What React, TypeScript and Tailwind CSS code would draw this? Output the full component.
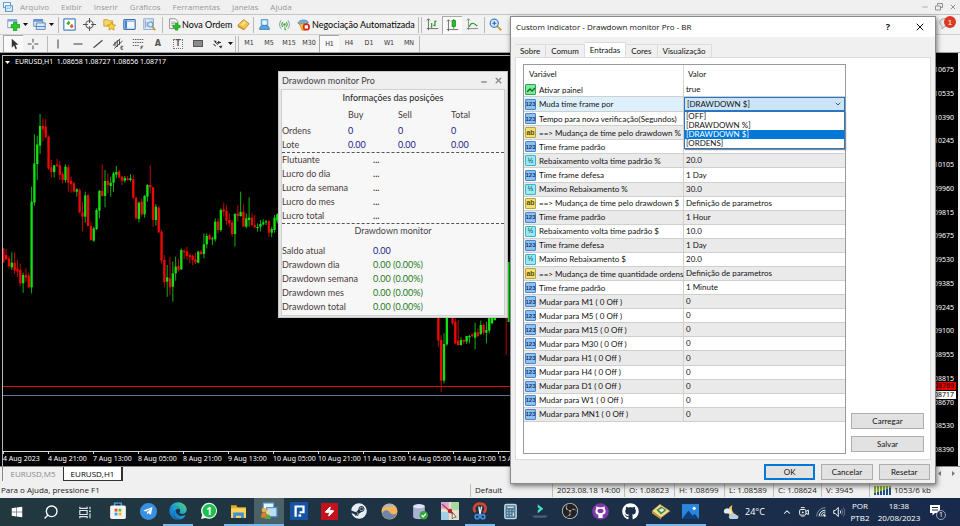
import type { ReactNode } from "react"
import { Calculator, ChevronDown, ChevronUp, Minus, Search, X, Zap } from "lucide-react"
import { FaEdge, FaGithub, FaSteam, FaTelegramPlane, FaWindows } from "react-icons/fa"
import { SiObsstudio } from "react-icons/si"
import { clsx } from "clsx"

type Candle = [high: number, low: number, top: number, bottom: number, up: 0 | 1]

// first visible run of bars
const firstRun: Candle[] = [
  [595, 638, 595, 637, 0], [597, 630, 615, 628, 0], [617, 655, 625, 648, 0], [607, 660, 638, 652, 1],
  [607, 672, 638, 662, 0], [630, 680, 655, 665, 0], [640, 710, 660, 700, 0], [668, 728, 675, 700, 1],
  [655, 695, 675, 683, 0], [668, 715, 677, 712, 0], [410, 730, 455, 712, 1], [253, 467, 340, 458, 1],
  [257, 390, 283, 342, 1], [192, 312, 228, 287, 1], [205, 275, 228, 238, 0], [207, 265, 230, 262, 0],
  [257, 360, 260, 355, 0], [330, 383, 352, 365, 0], [345, 382, 346, 366, 1], [326, 352, 344, 348, 0],
  [333, 390, 346, 375, 0], [365, 400, 372, 390, 0], [343, 398, 350, 390, 1], [345, 425, 352, 398, 0],
  [380, 428, 392, 402, 0], [395, 427, 400, 425, 0], [415, 440, 418, 425, 1], [415, 490, 420, 487, 0],
  [455, 545, 487, 500, 0], [425, 518, 436, 500, 1], [432, 528, 436, 528, 0], [515, 572, 528, 570, 0],
  [530, 575, 535, 572, 1], [475, 540, 480, 537, 1], [420, 505, 423, 482, 1], [343, 440, 423, 438, 0],
  [360, 472, 393, 438, 1], [370, 430, 393, 405, 0], [380, 440, 398, 408, 1], [365, 425, 370, 398, 1],
  [348, 385, 366, 374, 1], [360, 385, 364, 382, 0], [378, 405, 380, 392, 0], [378, 398, 384, 392, 1],
  [378, 392, 385, 390, 0], [372, 395, 385, 390, 1], [375, 447, 388, 443, 0], [440, 510, 443, 505, 0],
  [455, 517, 458, 507, 1], [445, 500, 455, 493, 0], [435, 503, 438, 493, 1], [402, 455, 405, 440, 1],
  [346, 430, 405, 412, 0], [410, 530, 412, 510, 0], [462, 527, 470, 510, 1], [468, 550, 473, 547, 0],
  [540, 640, 545, 632, 0], [615, 712, 630, 697, 0], [645, 740, 682, 695, 1], [620, 735, 685, 712, 0],
  [635, 755, 670, 710, 1], [620, 692, 650, 670, 1], [627, 665, 648, 660, 0], [595, 660, 600, 658, 1],
  [597, 628, 603, 607, 0], [590, 630, 604, 618, 0], [610, 640, 615, 622, 0], [613, 645, 618, 630, 0],
  [608, 642, 628, 637, 0], [602, 640, 605, 638, 1], [600, 615, 605, 612, 0], [550, 625, 583, 612, 1],
  [550, 595, 558, 583, 1], [552, 570, 556, 568, 0], [560, 585, 565, 568, 1], [505, 575, 515, 568, 1],
  [505, 550, 515, 540, 0], [475, 545, 480, 540, 1], [458, 500, 478, 485, 0], [465, 525, 482, 512, 0],
  [490, 530, 510, 520, 0], [510, 560, 518, 552, 0], [490, 590, 492, 552, 1], [465, 515, 490, 498, 0],
  [425, 500, 486, 498, 1], [463, 530, 485, 530, 0], [490, 535, 505, 530, 1], [442, 530, 503, 510, 1],
  [490, 530, 503, 525, 0], [495, 535, 525, 532, 0], [520, 545, 531, 534, 1], [510, 545, 522, 530, 1],
  [508, 527, 517, 523, 1], [510, 525, 514, 517, 1], [510, 562, 514, 548, 0], [530, 562, 537, 548, 1],
  [495, 548, 503, 540, 1], [490, 520, 493, 512, 1],
]

// bars that follow the monitor panel
const secondRun: Candle[] = [
  [780, 890, 790, 872, 0], [855, 1026, 870, 992, 0], [850, 1000, 882, 992, 1], [787, 887, 790, 883, 1],
  [780, 800, 790, 800, 1], [790, 825, 795, 820, 0], [805, 883, 815, 880, 0], [810, 887, 872, 885, 0],
  [862, 887, 870, 885, 1], [868, 882, 870, 875, 0], [858, 882, 858, 875, 1], [855, 880, 858, 862, 1],
  [850, 862, 853, 858, 0], [818, 898, 847, 863, 1], [835, 862, 847, 858, 0], [812, 855, 825, 852, 1],
  [820, 855, 825, 848, 0], [815, 880, 840, 848, 1], [790, 850, 800, 842, 1], [795, 822, 800, 820, 1],
  [790, 812, 795, 810, 1], [780, 800, 785, 795, 0], [770, 798, 775, 790, 1], [780, 800, 785, 795, 0],
  [800, 915, 800, 805, 0],
]

const timeLabels = [
  "4 Aug 2023", "4 Aug 21:00", "7 Aug 13:00", "8 Aug 05:00", "8 Aug 21:00", "9 Aug 13:00",
  "10 Aug 05:00", "10 Aug 21:00", "11 Aug 13:00", "14 Aug 05:00", "14 Aug 21:00", "15 Aug 13:00",
]

const priceLabels = [
  "1.10675", "1.10535", "1.10390", "1.10245", "1.10105", "1.09960", "1.09815", "1.09675", "1.09530",
  "1.09385", "1.09245", "1.09100", "1.08955", "1.08815", "1.08670", "1.08530", "1.08390",
]

function Candles({ bars, start }: { bars: Candle[]; start: number }) {
  return (
    <>
      {bars.map(([high, low, top, bottom, up], i) => {
        const x = 10 + (start + i) * 8.475
        return (
          <g key={i} fill={up ? "#12e012" : "#ee0808"}>
            <rect x={x - 1.5} y={high} width="3" height={low - high} opacity=".8" />
            <rect x={x - 3.5} y={top} width="7" height={Math.max(bottom - top, 3)} />
          </g>
        )
      })}
    </>
  )
}

function Chart() {
  return (
    <section
      aria-label="EURUSD,H1"
      className="mr-[2px] flex min-h-0 flex-1 border-l-2 border-t-2 border-black bg-black font-['Noto_Sans',sans-serif] text-[7px] text-white"
    >
      <div className="flex min-w-0 flex-1 flex-col border-l border-t border-[#b8b8b8]">
        <div className="relative min-h-0 flex-1 overflow-hidden border-b border-[#d8d8d8]">
          <svg className="absolute inset-0 h-full w-full" aria-hidden="true">
            <g transform="translate(-3 -6) scale(.33333)">
              <Candles bars={firstRun} start={0} />
              <Candles bars={secondRun} start={154} />
              <rect x="1523" y="636" width="6" height="180" fill="#12e012" />
            </g>
            <rect x="0" y="330" width="100%" height="1" fill="#d01414" />
            <rect x="0" y="339" width="100%" height="1" fill="#5f7590" />
          </svg>
          <p className="relative flex items-center gap-[5px] pl-[2px] pt-px leading-[10px]">
            <svg width="5" height="3" viewBox="0 0 5 3" fill="#fff" aria-hidden="true">
              <path d="M0 0h5L2.5 3z" />
            </svg>
            <span className="whitespace-pre">EURUSD,H1  1.08658 1.08727 1.08656 1.08717</span>
          </p>
        </div>
        <div className="flex h-[14px] overflow-hidden">
          {timeLabels.map((label) => (
            <span key={label} className="w-[45px] shrink-0 whitespace-nowrap leading-[10px]">
              <i className="block h-[2px] w-px bg-[#d8d8d8]" />
              {label}
            </span>
          ))}
        </div>
      </div>
      <div className="relative flex w-[46px] flex-col justify-between border-l border-[#b8b8b8] pb-[11px] pr-1 pt-[10px] text-right leading-[10px]">
        {priceLabels.map((label) => (
          <span key={label}>{label}</span>
        ))}
        <span className="absolute right-[2px] top-[327px] bg-[#f00000] pr-[2px] leading-[8px] text-black">1.08769</span>
        <span className="absolute right-[2px] top-[336px] bg-white pr-[2px] leading-[8px] text-black">1.08717</span>
      </div>
    </section>
  )
}

function Icon({ children, size = 13 }: { children: ReactNode; size?: number }) {
  return (
    <svg width={size} height={size} viewBox="0 0 16 16" fill="none" aria-hidden="true" className="shrink-0">
      {children}
    </svg>
  )
}

function Tool({
  label,
  children,
  pressed = false,
}: {
  label: string
  children: ReactNode
  pressed?: boolean
}) {
  return (
    <button
      type="button"
      aria-label={label}
      className={clsx(
        "flex h-[18px] w-5 shrink-0 items-center justify-center",
        pressed && "border-l border-t border-[#a8a8a8] bg-[#fafafa]"
      )}
    >
      {children}
    </button>
  )
}

function Sep({ wide = false }: { wide?: boolean }) {
  return <span className={clsx("h-4 shrink-0 border-l border-[#b9b9b9]", wide ? "w-1 border-r" : "w-px")} />
}

function Caret() {
  return (
    <svg width="5" height="3" viewBox="0 0 5 3" aria-hidden="true" className="shrink-0">
      <path d="M0 0h5L2.5 3z" fill="#111" />
    </svg>
  )
}

function MainToolbar() {
  return (
    <div className="flex h-5 items-center border-t border-[#c4c4c4] bg-[#f2f2f2] pl-[3px] font-[Lato,sans-serif] text-[9px] text-black">
      <Tool label="Novo gráfico">
        <Icon>
          <rect x="1" y="2" width="11" height="10" fill="#fff" stroke="#6b93c4" />
          <path d="M1 2h11v2.500H1z" fill="#7fa9dc" />
          <path d="M8 5h4v3h4v4h-4v4H8v-4H5V8h3z" fill="#24cc24" stroke="#128512" strokeWidth=".7" />
        </Icon>
      </Tool>
      <Caret />
      <span className="w-px" />
      <Tool label="Perfis">
        <Icon>
          <rect x="1" y="2" width="11" height="8" fill="#fff" stroke="#3f73b3" />
          <path d="M1 2h11v2.500H1zM4 6h11v2.500H4z" fill="#5e94d6" />
          <path d="M4 6h11v8H4z" fill="#d9e8f8" stroke="#3f73b3" />
          <path d="M4 10h11v1H4z" fill="#3f73b3" />
        </Icon>
      </Tool>
      <Caret />
      <span className="w-1" />
      <Sep />
      <Tool label="Observação do mercado">
        <Icon>
          <rect x="1" y="1" width="14" height="14" rx="1" fill="#fff" stroke="#4d83c2" strokeWidth="1.500" />
          <path d="M4 7l3-4 2 3-2 3z" fill="#35b335" />
          <path d="M8 10l3-3 2 3-2 3z" fill="#e05d2b" />
        </Icon>
      </Tool>
      <Tool label="Janela de dados">
        <Icon>
          <circle cx="8" cy="8" r="4.500" stroke="#555" strokeWidth="1.300" />
          <path d="M8 0v6M8 10v6M0 8h6M10 8h6" stroke="#555" strokeWidth="1.300" />
        </Icon>
      </Tool>
      <Tool label="Navegador">
        <Icon>
          <path d="M1 2h5l1 1.500h5V10H1z" fill="#f5d66b" stroke="#c79a24" />
          <path d="M10.500 5l1.600 3.300 3.600.5-2.600 2.500.6 3.600-3.200-1.700-3.200 1.700.6-3.600-2.600-2.500 3.600-.5z" fill="#ffd23c" stroke="#b98512" strokeWidth=".8" />
        </Icon>
      </Tool>
      <Tool label="Terminal">
        <Icon>
          <rect x="1" y="2" width="14" height="12" rx="1" fill="#f3f8ff" stroke="#3a6fb0" strokeWidth="1.400" />
          <path d="M2 3h3v10H2z" fill="#4484cf" />
          <path d="M5 3h9v2H5z" fill="#9fc2ea" />
        </Icon>
      </Tool>
      <Tool label="Testador de estratégia">
        <Icon>
          <rect x="1" y="1" width="12" height="13" fill="#dfeaf6" stroke="#7d9dc2" />
          <path d="M3 3v9M5 5v6M11 3v3" stroke="#7d9dc2" />
          <circle cx="9" cy="8" r="3.200" fill="#cfe6fb" stroke="#5d8cc0" strokeWidth="1.200" />
          <path d="M11.500 10.500L15 15" stroke="#c9922b" strokeWidth="2" />
        </Icon>
      </Tool>
      <span className="w-[3px]" />
      <Sep />
      <button type="button" className="ml-[5px] flex w-[65px] shrink-0 items-center gap-px whitespace-nowrap">
        <Icon>
          <path d="M2 1h7l3 3v9H2z" fill="#fff" stroke="#777" />
          <path d="M4 5h5M4 7h4M4 9h3" stroke="#888" />
          <path d="M9 6h3v3h3v3h-3v3H9v-3H6V9h3z" fill="#21c421" stroke="#128012" strokeWidth=".6" />
        </Icon>
        Nova Ordem
      </button>
      <Tool label="MetaEditor">
        <Icon>
          <path d="M1 9l7-7 7 5-6 7z" fill="#f4c64a" stroke="#b5811c" />
          <path d="M1 9l8 5v1.500L1 11z" fill="#c98f1f" />
          <path d="M5 8l4-4 2 1.500-4 4z" fill="#fbe49b" />
        </Icon>
      </Tool>
      <Sep />
      <Tool label="Conta">
        <Icon>
          <path d="M4 2h8v7H4z" fill="#b8dcf7" stroke="#3b86c6" />
          <path d="M2 14c0-4 3-5 6-5s6 1 6 5z" fill="#5aa7e2" stroke="#2f77b5" />
          <circle cx="8" cy="6" r="2.500" fill="#e8f4fd" />
        </Icon>
      </Tool>
      <Tool label="Sinais">
        <Icon>
          <path d="M4 3a7 7 0 000 10M12 3a7 7 0 010 10" stroke="#8fa7b3" strokeWidth="1.300" />
          <path d="M6 5a4 4 0 000 6M10 5a4 4 0 010 6" stroke="#39a839" strokeWidth="1.300" />
          <circle cx="8" cy="8" r="1.500" fill="#39a839" />
          <path d="M8 9l2 6H8z" fill="#39a839" />
        </Icon>
      </Tool>
      <button type="button" className="ml-[3px] flex w-[121px] shrink-0 items-center gap-[2px] whitespace-nowrap">
        <Icon>
          <path d="M1 6c2-4 10-5 13-1l-2 3H3z" fill="#6fb3e6" stroke="#3379b4" strokeWidth=".8" />
          <path d="M3 7h9l-2 8H6z" fill="#f2c443" stroke="#b98512" strokeWidth=".8" />
          <circle cx="11.500" cy="11" r="4.500" fill="#d92a14" />
          <rect x="9.500" y="9" width="4" height="4" fill="#fff" />
        </Icon>
        Negociação Automatizada
      </button>
      <Sep wide />
      <Tool label="Gráfico de barras">
        <Icon>
          <path d="M3 1v14M1 13h14M1 3l2-2 2 2" stroke="#555" />
          <path d="M7 6v6M6 11h1M11 3v7M11 4h2M9 9h2" stroke="#1a9a1a" strokeWidth="1.400" />
        </Icon>
      </Tool>
      <Tool label="Candelabros" pressed>
        <Icon>
          <path d="M3 1v14M1 13h14M1 3l2-2 2 2" stroke="#555" />
          <path d="M9.500 0v12" stroke="#128512" />
          <rect x="7.500" y="2" width="4" height="7" fill="#27c427" stroke="#128512" />
        </Icon>
      </Tool>
      <Tool label="Gráfico de linha">
        <Icon>
          <path d="M3 1v14M1 13h14M1 3l2-2 2 2" stroke="#777" />
          <path d="M4 11c2-6 5-6 10-1" stroke="#1a9a1a" strokeWidth="1.300" />
        </Icon>
      </Tool>
      <span className="w-[2px]" />
      <Sep />
      <Tool label="Ampliar">
        <Icon>
          <path d="M10 10l5 5" stroke="#d3a02d" strokeWidth="2.500" />
          <circle cx="6.500" cy="6.500" r="5" fill="#d7ecfd" stroke="#3b80c6" strokeWidth="1.500" />
          <path d="M4 6.500h5M6.500 4v5" stroke="#2a66ab" strokeWidth="1.400" />
        </Icon>
      </Tool>
    </div>
  )
}

const frames = ["M1", "M5", "M15", "M30", "H1", "H4", "D1", "W1", "MN"]

function DrawToolbar() {
  return (
    <div className="flex h-[18px] items-center border-t border-[#cfcfcf] bg-[#f2f2f2] pl-[3px] font-['DejaVu_Sans_Condensed','DejaVu_Sans',sans-serif] text-[7px] text-[#333]">
      <Tool label="Cursor" pressed>
        <Icon size={12}>
          <path d="M5 1v12l3-3 2 5 2-1-2-5h4z" fill="#333" />
        </Icon>
      </Tool>
      <Tool label="Cruz">
        <Icon size={12}>
          <path d="M8 1v5M8 10v5M1 8h5M10 8h5" stroke="#444" strokeWidth="1.300" />
        </Icon>
      </Tool>
      <span className="w-1" />
      <Sep />
      <Tool label="Linha vertical">
        <Icon size={12}>
          <path d="M8 2v12" stroke="#444" strokeWidth="1.400" />
        </Icon>
      </Tool>
      <Tool label="Linha horizontal">
        <Icon size={12}>
          <path d="M2 8h12" stroke="#444" strokeWidth="1.400" />
        </Icon>
      </Tool>
      <Tool label="Linha de tendência">
        <Icon size={12}>
          <path d="M2 13L14 3" stroke="#444" strokeWidth="1.400" />
        </Icon>
      </Tool>
      <Tool label="Canal">
        <Icon size={12}>
          <path d="M1 10L11 1M3 14L14 4M4 5v6M7 3v9M10 3v6" stroke="#333" strokeWidth="1.200" />
          <path d="M15 11h-3v4h3M12 13h2" stroke="#333" />
        </Icon>
      </Tool>
      <Tool label="Fibonacci">
        <Icon size={12}>
          <path d="M1 2h14M1 6h14M1 10h9" stroke="#555" strokeDasharray="2 1" strokeWidth="1.200" />
          <path d="M12 15v-4h3M12 13h2" stroke="#333" />
        </Icon>
      </Tool>
      <Tool label="Texto">
        <span className="text-[9px] font-bold text-[#555]">A</span>
      </Tool>
      <Tool label="Etiqueta">
        <span className="flex h-[10px] w-[10px] items-center justify-center border border-dotted border-[#777] text-[8px] font-bold text-[#555]">
          T
        </span>
      </Tool>
      <Tool label="Retângulo">
        <span className="h-[7px] w-[10px] border border-[#555] bg-[#8a8a8a]" />
      </Tool>
      <Tool label="Setas">
        <Icon size={12}>
          <path d="M2 3l4 1-1 3zM9 11l5-1-2 4z" fill="#333" />
          <path d="M4 5l4 4M2 8l3 3M9 4v4M7 6h5" stroke="#333" strokeWidth="1.400" />
        </Icon>
      </Tool>
      <Caret />
      <span className="w-[2px]" />
      <Sep wide />
      {frames.map((frame) => (
        <Tool key={frame} label={frame} pressed={frame === "H1"}>
          {frame}
        </Tool>
      ))}
      <Sep />
    </div>
  )
}

const menus = ["Arquivo", "Exibir", "Inserir", "Gráficos", "Ferramentas", "Janelas", "Ajuda"]

function MenuBar() {
  return (
    <div className="flex h-[14px] items-center bg-[#f0f0f0] pl-[3px] pr-[3px] font-['Open_Sans',sans-serif] text-[8px] text-[#989898]">
      <Icon size={10}>
        <rect x="1" y="1" width="11" height="8" fill="#fff" stroke="#4a90d0" strokeWidth="1.500" />
        <rect x="4" y="6" width="11" height="9" fill="#e3f0fc" stroke="#4a90d0" strokeWidth="1.500" />
        <path d="M6 12l2-3 2 2 3-3" stroke="#4a90d0" />
      </Icon>
      <nav className="ml-[7px] flex gap-3">
        {menus.map((menu) => (
          <button key={menu} type="button">
            {menu}
          </button>
        ))}
      </nav>
      <div className="ml-auto flex gap-[6px] text-[#8c9099]">
        <button type="button" aria-label="Minimizar"><Minus size={8} /></button>
        <button type="button" aria-label="Restaurar">
          <Icon size={8}>
            <path d="M5 5V1h10v8h-4M1 6h10v8H1z" stroke="currentColor" strokeWidth="2" />
          </Icon>
        </button>
        <button type="button" aria-label="Fechar"><X size={8} strokeWidth={3} /></button>
      </div>
    </div>
  )
}

const results = ["Flutuante", "Lucro do dia", "Lucro da semana", "Lucro do mes", "Lucro total"]
const drawdowns = ["Drawdown dia", "Drawdown semana", "Drawdown mes", "Drawdown total"]

function MonitorPanel() {
  return (
    <section className="absolute left-[278px] top-[71px] w-[230px] border border-[#c9c9c9] bg-[#e4e4e4] pb-px font-[Lato,sans-serif] text-[9px] leading-[14px] text-[#4b3b3b]">
      <header className="flex h-[17px] items-center justify-between bg-[#efefef] pl-[3px] pr-1 text-[#444]">
        <h2>Drawdown monitor Pro</h2>
        <div className="flex gap-[6px] text-[#8d8d8d]">
          <button type="button" aria-label="Minimizar" className="pt-[3px]"><Minus size={8} strokeWidth={4} /></button>
          <button type="button" aria-label="Fechar"><X size={9} strokeWidth={4} /></button>
        </div>
      </header>
      <div className="mx-[2px] border border-[#d0d0d0] bg-[#f7f7f7]">
        <h3 className="pt-px text-center text-[#222]">Informações das posições</h3>
        <table className="w-full text-left">
          <thead>
            <tr className="h-[19px]">
              <th className="w-[66px] font-normal" />
              <th className="w-[50px] font-normal">Buy</th>
              <th className="w-[53px] font-normal">Sell</th>
              <th className="font-normal">Total</th>
            </tr>
          </thead>
          <tbody className="text-[#1c1c8c]">
            <tr>
              <th className="font-normal text-[#4b3b3b]">Ordens</th>
              <td>0</td>
              <td>0</td>
              <td>0</td>
            </tr>
            <tr>
              <th className="font-normal text-[#4b3b3b]">Lote</th>
              <td>0.00</td>
              <td>0.00</td>
              <td>0.00</td>
            </tr>
          </tbody>
        </table>
        <dl className="grid grid-cols-[91px_1fr] border-y border-dashed border-[#555]">
          {results.map((label) => (
            <div key={label} className="contents">
              <dt>{label}</dt>
              <dd className="font-bold">...</dd>
            </div>
          ))}
        </dl>
        <h3 className="text-center text-[#444]">Drawdown monitor</h3>
        <dl className="grid grid-cols-[91px_1fr] pb-px pt-[6px]">
          <dt>Saldo atual</dt>
          <dd className="text-[#1c1c8c]">0.00</dd>
          {drawdowns.map((label) => (
            <div key={label} className="contents">
              <dt>{label}</dt>
              <dd className="text-[#1e7a1e]">0.00 (0.00%)</dd>
            </div>
          ))}
        </dl>
      </div>
    </section>
  )
}

type Kind = "bool" | "int" | "text" | "real"

const inputs: { kind: Kind; name: string; value: string }[] = [
  { kind: "bool", name: "Ativar painel", value: "true" },
  { kind: "int", name: "Muda time frame por", value: "[DRAWDOWN $]" },
  { kind: "int", name: "Tempo para nova verificação(Segundos)", value: "" },
  { kind: "text", name: "==> Mudança de time pelo drawdown %", value: "" },
  { kind: "int", name: "Time frame padrão", value: "" },
  { kind: "real", name: "Rebaixamento volta time padrão %", value: "20.0" },
  { kind: "int", name: "Time frame defesa", value: "1 Day" },
  { kind: "real", name: "Maximo Rebaixamento %", value: "30.0" },
  { kind: "text", name: "==> Mudança de time pelo drawdown $", value: "Definição de parametros" },
  { kind: "int", name: "Time frame padrão", value: "1 Hour" },
  { kind: "real", name: "Rebaixamento volta time padrão $", value: "10.0" },
  { kind: "int", name: "Time frame defesa", value: "1 Day" },
  { kind: "real", name: "Maximo Rebaixamento $", value: "20.0" },
  { kind: "text", name: "==> Mudança de time quantidade ordens", value: "Definição de parametros" },
  { kind: "int", name: "Time frame padrão", value: "1 Minute" },
  { kind: "int", name: "Mudar para M1 ( 0 Off )", value: "0" },
  { kind: "int", name: "Mudar para M5 ( 0 Off )", value: "0" },
  { kind: "int", name: "Mudar para M15 ( 0 Off )", value: "0" },
  { kind: "int", name: "Mudar para M30 ( 0 Off )", value: "0" },
  { kind: "int", name: "Mudar para H1 ( 0 Off )", value: "0" },
  { kind: "int", name: "Mudar para H4 ( 0 Off )", value: "0" },
  { kind: "int", name: "Mudar para D1 ( 0 Off )", value: "0" },
  { kind: "int", name: "Mudar para W1 ( 0 Off )", value: "0" },
  { kind: "int", name: "Mudar para MN1 ( 0 Off )", value: "0" },
]

const kindStyle: Record<Kind, string> = {
  bool: "border-[#2aa84a] bg-[#7fe89a] text-[#0c6b25]",
  int: "border-[#4a86c8] bg-[#8fc0f0] text-[#0d3a75]",
  text: "border-[#b8a43a] bg-[#f0e07a] text-[#5e4d00]",
  real: "border-[#3fb4c8] bg-[#9be8f2] text-[#0b6a7a]",
}

const kindText: Record<Kind, string> = { bool: "", int: "123", text: "ab", real: "½" }

function KindIcon({ kind }: { kind: Kind }) {
  return (
    <span
      className={clsx(
        "flex h-[11px] w-[11px] shrink-0 items-center justify-center rounded-[1px] border font-['Liberation_Sans',sans-serif] font-bold leading-[8px]",
        kind === "int" ? "text-[6px]" : "text-[7px]",
        kindStyle[kind]
      )}
    >
      {kind === "bool" ? (
        <svg width="8" height="6" viewBox="0 0 8 6" fill="none" aria-hidden="true">
          <path d="M0 5l3-3 2 2 3-3" stroke="currentColor" strokeWidth="1.300" />
        </svg>
      ) : (
        kindText[kind]
      )}
    </span>
  )
}

const options = ["[OFF]", "[DRAWDOWN %]", "[DRAWDOWN $]", "[ORDENS]"]

function ModeSelect() {
  return (
    <div className="relative">
      <select
        aria-label="Muda time frame por"
        defaultValue="[DRAWDOWN $]"
        className="block h-[14px] w-full appearance-none border border-[#2a74c4] bg-[#cce4f7] pl-[2px] leading-[12px]"
      >
        {options.map((option) => (
          <option key={option}>{option}</option>
        ))}
      </select>
      <ChevronDown size={8} className="pointer-events-none absolute right-[3px] top-[3px]" />
      <ul
        role="listbox"
        aria-label="Opções"
        className="absolute inset-x-0 top-[14px] z-10 border border-[#2a74c4] bg-white leading-[9px] shadow-[1px_1px_1px_#888]"
      >
        {options.map((option) => (
          <li
            key={option}
            role="option"
            aria-selected={option === "[DRAWDOWN $]"}
            className={clsx("pl-px", option === "[DRAWDOWN $]" && "bg-[#0078d7] text-white")}
          >
            {option}
          </li>
        ))}
      </ul>
    </div>
  )
}

function InputsTable() {
  return (
    <div className="h-[390px] w-[323px] shrink-0 border border-[#9a9a9a] bg-white">
      <table className="h-[357px] w-full table-fixed border-separate border-spacing-0 text-left">
        <thead>
          <tr className="h-[18px]">
            <th className="w-[159px] pl-[5px] font-normal">Variável</th>
            <th className="border-l border-[#d8d8d8] pl-1 font-normal">Valor</th>
          </tr>
        </thead>
        <tbody>
          {inputs.map((input, i) => (
            <tr
              key={i}
              className={clsx(i === 1 ? "bg-[#dff0fd]" : i % 2 ? "bg-[#eaeaea]" : "bg-white")}
            >
              <td className="h-[14px] border-b border-[#cfcfcf] py-0 pl-px">
                <div className="flex h-[13px] items-center gap-[3px] whitespace-nowrap">
                  <KindIcon kind={input.kind} />
                  {input.name}
                </div>
              </td>
              <td className={clsx("h-[14px] border-b border-l border-[#cfcfcf] py-0 leading-[13px]", i !== 1 && "pl-[2px]")}>
                {i === 1 ? <ModeSelect /> : input.value}
              </td>
            </tr>
          ))}
        </tbody>
      </table>
    </div>
  )
}

function DialogButton({ children, primary = false }: { children: ReactNode; primary?: boolean }) {
  return (
    <button
      type="button"
      className={clsx(
        "flex h-4 items-center justify-center bg-[#e2e2e2]",
        primary ? "border-2 border-[#0078d7]" : "border border-[#adadad]"
      )}
    >
      {children}
    </button>
  )
}

const tabs = ["Sobre", "Comum", "Entradas", "Cores", "Visualização"]

function IndicatorDialog() {
  return (
    <section
      role="dialog"
      aria-label="Custom Indicator - Drawdown monitor Pro - BR"
      className="absolute left-[510px] top-4 flex h-[468px] w-[426px] flex-col border border-[#8a8a8a] bg-[#f0f0f0] font-[Lato,'Liberation_Sans',sans-serif] text-[8px] text-[#111] shadow-[1px_2px_5px_#0008]"
    >
      <header className="flex h-5 items-center bg-white pl-[5px] pr-[9px] font-['Open_Sans',sans-serif]">
        <h1>Custom Indicator - Drawdown monitor Pro - BR</h1>
        <button type="button" aria-label="Ajuda" className="ml-auto text-[9px] font-bold">?</button>
        <button type="button" aria-label="Fechar" className="ml-[24px]"><X size={12} strokeWidth={2} /></button>
      </header>
      <div role="tablist" className="mt-[5px] flex h-[15px] items-end pl-1">
        {tabs.map((tab) => (
          <button
            key={tab}
            type="button"
            role="tab"
            aria-selected={tab === "Entradas"}
            className={clsx(
              "border-r border-t border-[#dcdcdc] px-[5px]",
              tab === "Entradas" ? "h-[15px] bg-white" : "h-[13px]"
            )}
          >
            {tab}
          </button>
        ))}
      </div>
      <div className="mx-1 flex flex-1 gap-[5px] border border-[#dcdcdc] bg-white pl-[7px] pt-[6px]">
        <InputsTable />
        <div className="flex w-[73px] flex-col justify-end gap-[7px] pb-[7px]">
          <DialogButton>Carregar</DialogButton>
          <DialogButton>Salvar</DialogButton>
        </div>
      </div>
      <footer className="flex h-[23px] items-center justify-end pr-[5px]">
        <div className="grid w-[166px] grid-cols-3 gap-[6px]">
          <DialogButton primary>OK</DialogButton>
          <DialogButton>Cancelar</DialogButton>
          <DialogButton>Resetar</DialogButton>
        </div>
      </footer>
    </section>
  )
}

function StatusBar() {
  const cell = "flex h-[13px] items-center border-l border-[#bdbdbd] pl-1"
  return (
    <footer className="flex h-4 items-center whitespace-nowrap bg-[#f0f0f0] pl-px font-['Open_Sans',sans-serif] text-[8px] text-[#1c1c1c]">
      <span className="min-w-0 flex-1">Para o Ajuda, pressione F1</span>
      <span className={clsx(cell, "w-[82px]")}>Default</span>
      <span className={clsx(cell, "w-[72px]")}>2023.08.18 14:00</span>
      <span className={clsx(cell, "w-[50px]")}>O: 1.08623</span>
      <span className={clsx(cell, "w-[50px]")}>H: 1.08699</span>
      <span className={clsx(cell, "w-[49px]")}>L: 1.08589</span>
      <span className={clsx(cell, "w-[48px]")}>C: 1.08624</span>
      <span className={clsx(cell, "w-[48px]")}>V: 3945</span>
      <span className={clsx(cell, "w-[91px] gap-[3px]")}>
        <svg width="17" height="9" viewBox="0 0 17 9" aria-hidden="true">
          {[0, 1, 2, 3, 4, 5].map((i) => (
            <g key={i}>
              <rect x={i * 3} y="0" width="2" height="9" fill="#8aa820" />
              <rect x={i * 3} y={7 - i} width="2" height={2 + i} fill="#1d4f8c" />
            </g>
          ))}
        </svg>
        1053/6 kb
      </span>
    </footer>
  )
}

function ChartTabs() {
  return (
    <div className="flex h-4 items-start border-t border-[#8c8c8c] bg-[#f0f0f0] font-['Open_Sans',sans-serif] text-[8px]">
      <button type="button" className="ml-[2px] h-[14px] w-[61px] border-l border-[#888] text-[#8a8a8a]">EURUSD,M5</button>
      <button type="button" className="h-[14px] w-[60px] border-b border-l border-r-2 border-[#333] bg-white text-black">EURUSD,H1</button>
      <div className="ml-auto flex gap-[9px] pr-[5px] pt-1 text-[#777]">
        <svg width="4" height="5" viewBox="0 0 4 5" aria-hidden="true"><path d="M3 0v5L0 2.500z" fill="currentColor" /></svg>
        <svg width="4" height="5" viewBox="0 0 4 5" aria-hidden="true"><path d="M1 0v5l3-2.500z" fill="currentColor" /></svg>
      </div>
    </div>
  )
}

const apps: { name: string; icon: ReactNode; state?: "open" | "active" }[] = [
  {
    name: "Microsoft Store",
    icon: (
      <Icon size={18}>
        <path d="M5 4V1h6v3" stroke="#3aa7ea" strokeWidth="1.300" />
        <rect x="1" y="3" width="14" height="12" rx="1.500" fill="#f4f4f4" />
        <path d="M5 6h2.500v2.500H5z" fill="#e8502a" />
        <path d="M8.500 6H11v2.500H8.500z" fill="#7cb928" />
        <path d="M5 9.500h2.500V12H5z" fill="#29a3ea" />
        <path d="M8.500 9.500H11V12H8.500z" fill="#f7b813" />
      </Icon>
    ),
  },
  {
    name: "Telegram",
    icon: (
      <span className="flex h-[17px] w-[17px] items-center justify-center rounded-full bg-[#3a8fe0] text-white">
        <FaTelegramPlane size={10} />
      </span>
    ),
  },
  {
    name: "Edge",
    state: "open",
    icon: (
      <svg width="18" height="18" viewBox="0 0 18 18" aria-hidden="true">
        <defs>
          <linearGradient id="edge" x1="0" y1="1" x2="1" y2="0">
            <stop offset="0" stopColor="#0f5cc0" />
            <stop offset=".5" stopColor="#1ba0dc" />
            <stop offset="1" stopColor="#5fd65c" />
          </linearGradient>
        </defs>
        <FaEdge size={18} fill="url(#edge)" />
      </svg>
    ),
  },
  {
    name: "WhatsApp",
    icon: (
      <svg width="18" height="18" viewBox="0 0 18 18" aria-hidden="true">
        <path d="M1 17l1.200-4A8 8 0 115.500 16z" fill="#e9f7ec" />
        <circle cx="9.300" cy="8.800" r="6.800" fill="#1fbf4f" />
        <text x="9" y="12.500" textAnchor="middle" fontSize="10" fontWeight="bold" fill="#fff">1</text>
      </svg>
    ),
  },
  {
    name: "Explorador de Arquivos",
    state: "open",
    icon: (
      <Icon size={17}>
        <path d="M1 2h5l1 2h8v10H1z" fill="#e8a925" />
        <path d="M1 5h14v9H1z" fill="#fbd45c" />
        <path d="M3 9h10v5h-2.500v-2h-5v2H3z" fill="#3c8fd8" />
      </Icon>
    ),
  },
  {
    name: "MetaTrader",
    state: "active",
    icon: (
      <Icon size={18}>
        <rect x="3" y="1" width="9" height="7" fill="#e9f3fc" stroke="#6fa8dc" />
        <rect x="6" y="5" width="9" height="8" fill="#bcdcf6" stroke="#4a90d0" />
        <circle cx="3.500" cy="7" r="2" fill="#f0b24a" />
        <path d="M1 14c0-4 1-5 2.500-5S6 10 6 14z" fill="#de7f2b" />
        <circle cx="7" cy="9" r="1.800" fill="#f6d28a" />
        <path d="M4.500 15c0-3 1-4 2.500-4s2.500 1 2.500 4z" fill="#5bab3c" />
      </Icon>
    ),
  },
  {
    name: "Profit",
    icon: (
      <Icon size={18}>
        <rect width="16" height="16" fill="#1553a4" />
        <path d="M4 3h9v7H8.500V8.200H11V4.800H6V13H4z" fill="#fff" />
        <path d="M7.500 11H10v2H7.500z" fill="#fff" />
      </Icon>
    ),
  },
  {
    name: "Flash",
    icon: (
      <span className="flex h-[17px] w-[17px] items-center justify-center bg-[#c4111b] text-white">
        <Zap size={11} fill="currentColor" />
      </span>
    ),
  },
  { name: "Steam", icon: <FaSteam size={16} className="text-[#e6edf5]" /> },
  {
    name: "Clima",
    icon: (
      <Icon size={17}>
        <circle cx="8" cy="8" r="7.500" fill="#f2b559" />
        <path d="M.8 10C3 6 6 6 8 8.500s4 3 7.200 1A7.500 7.500 0 01.8 10z" fill="#6f86a8" />
        <path d="M.8 6a7.500 7.500 0 0113-2.500C9 3 5 3 .8 6z" fill="#a9b5c4" />
      </Icon>
    ),
  },
  {
    name: "Banco de dados",
    icon: (
      <Icon size={17}>
        <path d="M2 3v10c0 3 11 3 11 0V3z" fill="#aab0d4" />
        <ellipse cx="7.500" cy="3" rx="5.500" ry="2" fill="#dfe3f5" />
        <circle cx="12" cy="11.500" r="4" fill="#35a53a" />
        <path d="M10 11.500l1.500 1.500 2.500-3" stroke="#fff" strokeWidth="1.200" />
      </Icon>
    ),
  },
  {
    name: "Mapa",
    icon: (
      <Icon size={18}>
        <path d="M0 0h16v16H0z" fill="#e8e0c8" />
        <path d="M0 0h7v6H0z" fill="#d9a6cf" />
        <path d="M9 0h7v7H9z" fill="#a6d8a0" />
        <path d="M0 9h7v7H0z" fill="#9fd0e8" />
        <path d="M1 2l11 10" stroke="#c4364a" strokeWidth="1.200" />
        <circle cx="8" cy="8" r="2" fill="#c4202c" />
        <path d="M10 9v6l1.500-1.500h2z" fill="#fff" stroke="#333" strokeWidth=".6" />
      </Icon>
    ),
  },
  {
    name: "Captura",
    state: "open",
    icon: (
      <Icon size={18}>
        <path d="M4 9A5 4.500 0 018 1.500c6 0 6 6 3 8" stroke="#d8452c" strokeWidth="2.400" />
        <path d="M7 4l1 7M9.500 4L8 11" stroke="#e4e8ee" strokeWidth="1.300" />
        <circle cx="5.500" cy="13" r="1.800" stroke="#3f8fe0" strokeWidth="1.500" />
        <circle cx="10.500" cy="13" r="1.800" stroke="#3f8fe0" strokeWidth="1.500" />
      </Icon>
    ),
  },
  { name: "Calculadora", icon: <Calculator size={17} strokeWidth={2} className="text-[#c4d6e2]" fill="#4f7b96" /> },
  {
    name: "Filmora",
    icon: (
      <Icon size={18}>
        <path d="M1 12h14l-2 2H3z" fill="#4b6276" />
        <path d="M6 2l5 4-5 4V7l2-1-2-1z" fill="#3fe0c4" />
      </Icon>
    ),
  },
  {
    name: "OBS Studio",
    icon: (
      <span className="rounded-full bg-[#222] text-[#d6d6d6]">
        <SiObsstudio size={16} />
      </span>
    ),
  },
  {
    name: "GitHub Desktop",
    icon: (
      <Icon size={17}>
        <circle cx="8" cy="8" r="7.800" fill="#8338a8" />
        <path d="M6 14v-3c-3-.5-3.500-4-2-5.500V3l2 1h4l2-1v2.500C13.500 7 13 10.500 10 11v3z" fill="#fff" />
        <ellipse cx="8" cy="7.500" rx="2.800" ry="2" fill="#8338a8" />
      </Icon>
    ),
  },
  { name: "GitHub", icon: <FaGithub size={17} className="text-white" /> },
  {
    name: "MetaEditor",
    state: "open",
    icon: (
      <Icon size={18}>
        <path d="M0 8l7-6 9 6-8 6z" fill="#f0dc94" stroke="#a8812b" strokeWidth=".6" />
        <path d="M0 8l8 6v1.500L0 10z" fill="#c89a3a" />
        <path d="M4 7l4-3 5 3-5 4z" fill="#3b8f4e" />
        <path d="M6 7l3-1.500L11 7 8.500 9z" fill="#f2ead0" />
      </Icon>
    ),
  },
  {
    name: "Fotos",
    state: "open",
    icon: (
      <Icon size={17}>
        <path d="M0 1h16v14H0z" fill="#2a86dc" />
        <path d="M0 15l6-8 4 5 2-2 4 5z" fill="#0d3f7a" />
        <circle cx="11.500" cy="5" r="1.500" fill="#fff" />
      </Icon>
    ),
  },
]

function Taskbar() {
  return (
    <nav
      aria-label="Barra de tarefas"
      className="flex h-[28px] items-center bg-linear-to-r from-[#22383f] to-[#182a4c] font-['Open_Sans',sans-serif] text-[8px] text-white"
    >
      <button type="button" aria-label="Iniciar" className="flex w-[33px] justify-center"><FaWindows size={12} /></button>
      <button type="button" aria-label="Pesquisar" className="flex w-[35px] justify-center">
        <Search size={16} strokeWidth={2} className="-scale-x-100" />
      </button>
      <button type="button" aria-label="Visão de tarefas" className="flex w-[35px] justify-center">
        <Icon size={13}>
          <path d="M1 1v2h9V1M1 15v-2h9v2M1 5.500h9v5H1zM13.500 1v3M13.500 9v6" stroke="#dfe6ea" strokeWidth="1.400" />
          <rect x="12.500" y="5.500" width="2" height="2" fill="#dfe6ea" />
        </Icon>
      </button>
      <div className="grid h-full w-[603px] shrink-0 grid-cols-20">
        {apps.map(({ name, icon, state }) => (
          <button
            key={name}
            type="button"
            aria-label={name}
            className={clsx(
              "flex items-center justify-center border-b-2",
              state ? "border-[#76b9ed]" : "border-transparent",
              state === "active" && "bg-[#4a6168]"
            )}
          >
            {icon}
          </button>
        ))}
      </div>
      <button type="button" className="ml-auto flex w-[47px] items-center gap-[5px] text-[9px]">
        <Icon size={17}>
          <path d="M9 1a6 6 0 106 10A7 7 0 019 1z" fill="#f7c54a" />
          <path d="M1 8a3 3 0 015-3 3 3 0 012 4H2z" fill="#dfe9f5" />
          <path d="M7 14a2 2 0 011-4 3 3 0 015 1 1.500 1.500 0 010 3z" fill="#b9cde6" />
        </Icon>
        24°C
      </button>
      <div className="ml-[12px] flex items-center gap-[7px]">
        <ChevronUp size={10} strokeWidth={2.5} />
        <Icon size={10}>
          <rect x="1" y="4" width="10" height="9" rx="2" stroke="#fff" strokeWidth="1.500" />
          <path d="M11 7l4-2v7l-4-2M3 1h6M3 16h6" stroke="#fff" strokeWidth="1.500" />
          <circle cx="6" cy="8.500" r="1.500" fill="#fff" />
        </Icon>
        <Icon size={10}>
          <path d="M1 15A14 14 0 0115 1" stroke="#8b98aa" strokeWidth="1.500" />
          <path d="M5 15A10 10 0 0115 5M8 15a7 7 0 017-7M11 15a4 4 0 014-4" stroke="#fff" strokeWidth="1.500" />
          <circle cx="14" cy="14" r="1.500" fill="#fff" />
        </Icon>
        <Icon size={12}>
          <path d="M1 6h2l4-4v12l-4-4H1z" stroke="#fff" strokeWidth="1.300" />
          <path d="M9.500 6a3 3 0 010 4" stroke="#fff" strokeWidth="1.200" />
          <path d="M11.500 4a6 6 0 010 8M13.500 2a9 9 0 010 12" stroke="#6f7f96" strokeWidth="1.200" />
        </Icon>
      </div>
      <div className="ml-[5px] w-[20px] text-center leading-[12px]">
        <p>POR</p>
        <p>PTB2</p>
      </div>
      <time dateTime="2023-08-20T18:38" className="ml-[7px] w-[44px] text-center leading-[12px]">
        18:38
        <br />
        20/08/2023
      </time>
      <button type="button" aria-label="Notificações" className="relative ml-[8px] mr-[15px]">
        <svg width="16" height="16" viewBox="0 0 16 16" aria-hidden="true">
          <path d="M1 1h10v8H6l-2.500 2.500V9H1z" fill="#fff" />
          <path d="M3 3.500h6M3 6h6" stroke="#1b2c4b" />
        </svg>
        <span className="absolute -right-px bottom-0 flex h-[10px] w-[10px] items-center justify-center rounded-full border border-[#9aa4b4] bg-[#1b2c4b] text-[7px]">
          1
        </span>
      </button>
    </nav>
  )
}

export default function App() {
  return (
    <main className="relative flex h-screen flex-col overflow-hidden bg-[#f0f0f0]">
      <MenuBar />
      <MainToolbar />
      <DrawToolbar />
      <div className="h-px bg-[#a0a0a0]" />
      <Chart />
      <ChartTabs />
      <StatusBar />
      <Taskbar />
      <button type="button" aria-label="Alertas" className="absolute right-[3px] top-4 flex items-center">
        <svg width="19" height="14" viewBox="0 0 19 14" aria-hidden="true">
          <path d="M2 7a5 3.500 0 119 1l-5 3-2 2v-3a4 4 0 01-2-3z" fill="#e6e6e6" stroke="#aaa" />
          <circle cx="12" cy="6" r="6" fill="#dc3a22" />
          <text x="12" y="9" textAnchor="middle" fontSize="8" fill="#fff" fontFamily="Liberation Sans">1</text>
        </svg>
      </button>
      <MonitorPanel />
      <IndicatorDialog />
    </main>
  )
}
